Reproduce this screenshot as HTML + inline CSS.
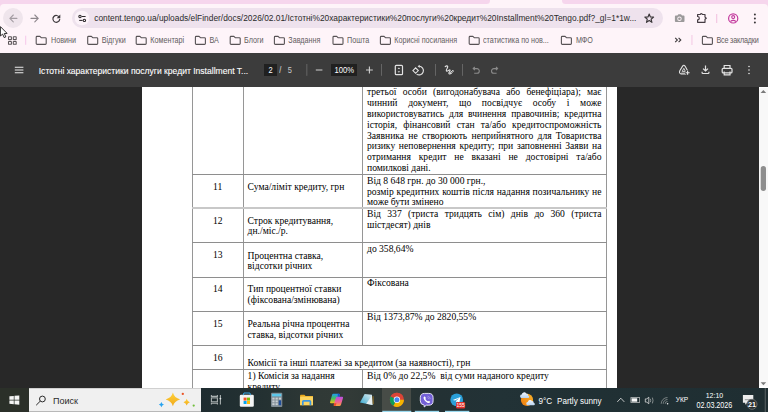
<!DOCTYPE html>
<html><head><meta charset="utf-8">
<style>
*{margin:0;padding:0;box-sizing:border-box}
html,body{width:768px;height:412px;overflow:hidden;background:#282828;font-family:"Liberation Sans",sans-serif}
.a{position:absolute}
#tabs{left:0;top:0;width:768px;height:12px;background:#f6d6ed}
#tb{left:0;top:4.2px;width:768px;height:48.8px;background:#fef4f9;border-radius:4px 4px 0 0}
#pill{left:72px;top:8px;width:591px;height:20px;border-radius:10px;background:#eee2ed}
#url{left:94.2px;top:11px;font-size:8.4px;color:#2a2a2a;white-space:nowrap;line-height:14px;transform:scaleY(1.18);transform-origin:0 10.5px}
.bm{font-size:7.2px;color:#625d60;white-space:nowrap;line-height:12px;top:35px;transform:scaleY(1.18);transform-origin:0 8.38px}
#pdftb{left:0;top:53px;width:768px;height:34px;background:#3c3c3c}
#title{left:38.75px;top:64.5px;font-size:8.55px;color:#fff;white-space:nowrap;line-height:12px;-webkit-text-stroke:0.1px #fff}
#view{left:0;top:87px;width:759px;height:301px;background:#282828}
#page{left:141.5px;top:87px;width:475.5px;height:301px;background:#fff}
.hl{position:absolute;height:1px;background:#8e8e8e}
.vl{position:absolute;width:1px;background:#969696}
.t{position:absolute;font-family:"Liberation Serif",serif;font-size:9.6px;line-height:11px;color:#000;white-space:nowrap}
.j{text-align:justify;text-align-last:justify;width:234.5px}
#sb{left:759px;top:87px;width:9px;height:301px;background:#f8f8f8}
#task{left:0;top:388px;width:768px;height:24px;background:linear-gradient(90deg,#1e2c30 0px,#1e2c30 200px,#243132 265px,#303936 320px,#323a37 350px,#2c3634 390px,#233134 440px,#223236 500px,#203034 600px,#1f2e32 768px)}
.ti{font-size:9px;color:#fff;white-space:nowrap;line-height:11px}
</style></head><body>
<div id="tabs" class="a"></div>
<div id="tb" class="a"></div>
<div id="pill" class="a"></div>
<div class="a" style="left:486px;top:0;width:80px;height:5px;background:#fef4f9"></div><div class="a" style="left:470px;top:0;width:20.3px;height:4.2px;background:#f6d6ed;border-bottom-right-radius:3.5px"></div><div class="a" style="left:562.2px;top:0;width:20px;height:4.2px;background:#f6d6ed;border-bottom-left-radius:3.5px"></div>
<!-- back hover circle -->
<div class="a" style="left:3.2px;top:8.2px;width:19.6px;height:19.6px;border-radius:10px;background:#efe5ec"></div>
<svg class="a" style="left:0;top:0" width="768" height="53">
 <g fill="none" stroke-width="1.1" stroke-linecap="round" stroke-linejoin="round">
  <path d="M10 18.4H16.9M13.3 15L9.9 18.4L13.3 21.8" stroke="#a39ca2"/>
  <path d="M31 18.4H38.2M34.8 15L38.2 18.4L34.8 21.8" stroke="#8e878d"/>
 </g>
 <path d="M59.3 17.2A3.4 3.4 0 1 0 59.7 19.3" fill="none" stroke="#3f3a3e" stroke-width="1.2" stroke-linecap="round"/>
 <path d="M60.3 14.6V18.2H56.7Z" fill="#3f3a3e"/>
 <circle cx="82" cy="18" r="7.3" fill="#fcf3f9"/>
 <g fill="none" stroke="#2b282a" stroke-width="1.05">
  <circle cx="80" cy="16.5" r="1.2"/><path d="M81.8 16.5H85.6"/>
  <circle cx="84.4" cy="20.4" r="1.2"/><path d="M79.2 20.4H82.6"/>
 </g>
 <path d="M649.20 14.00L650.38 16.98L653.57 17.18L651.10 19.22L651.90 22.32L649.20 20.60L646.50 22.32L647.30 19.22L644.83 17.18L648.02 16.98Z" fill="none" stroke="#3a3639" stroke-width="1.15" stroke-linejoin="round"/>
 <path d="M675.8 15.6h1.6l1-1.3h2.6l1 1.3h1.6a0.9 0.9 0 0 1 0.9 0.9v4.5a0.9 0.9 0 0 1-0.9 0.9h-7.8a0.9 0.9 0 0 1-0.9-0.9v-4.5a0.9 0.9 0 0 1 0.9-0.9z" fill="#9b999a"/>
 <circle cx="679.45" cy="18.8" r="2.2" fill="#fef4f9"/><circle cx="679.45" cy="18.8" r="1.3" fill="#9b999a"/>
 <path d="M697.6 14.5H700.3a1 1 0 0 1 2 0H705V17.1l1.3 1.1l-1.3 1.1V22.3H697.6V19.9a1.7 1.7 0 0 0 0-3.4Z" fill="none" stroke="#453c43" stroke-width="1.2" stroke-linejoin="round"/>
 <rect x="716.3" y="14" width="0.9" height="9" fill="#f0b8dc"/>
 <circle cx="733.2" cy="18.4" r="4.6" fill="none" stroke="#c33a9e" stroke-width="1.2"/>
 <circle cx="733.2" cy="17.1" r="1.5" fill="none" stroke="#c33a9e" stroke-width="1.1"/>
 <path d="M730.4 21.5Q733.2 19.3 736 21.5" fill="none" stroke="#c33a9e" stroke-width="1.1"/>
 <g fill="#3a3739"><circle cx="754.9" cy="14.6" r="1"/><circle cx="754.9" cy="18.5" r="1"/><circle cx="754.9" cy="22.4" r="1"/></g>
 <!-- apps grid -->
 <g fill="none" stroke="#5a5558" stroke-width="1.05">
  <rect x="8.5" y="36.7" width="2.9" height="2.9" rx="0.4"/><rect x="13.3" y="36.7" width="2.9" height="2.9" rx="0.4"/>
  <rect x="8.5" y="41.4" width="2.9" height="2.9" rx="0.4"/><rect x="13.3" y="41.4" width="2.9" height="2.9" rx="0.4"/>
 </g>
 <rect x="25.2" y="35.7" width="1" height="9.1" fill="#f5c8ea"/>
 <rect x="691.5" y="35" width="0.9" height="10" fill="#f2c2e2"/>
 <path d="M675.2 37.8L677.4 40L675.2 42.2M678.6 37.8L680.8 40L678.6 42.2" fill="none" stroke="#3d3a3c" stroke-width="1.1"/>
 <g id="fold" fill="none" stroke="#575255" stroke-width="1.1" stroke-linejoin="round">
  <path d="M36.2 37.2q0-0.8 0.8-0.8h2.9l1.3 1.3h4.1q0.9 0 0.9 0.9v4.9q0 0.9-0.9 0.9h-8.2q-0.9 0-0.9-0.9z"/>
  <path d="M87.7 37.2q0-0.8 0.8-0.8h2.9l1.3 1.3h4.1q0.9 0 0.9 0.9v4.9q0 0.9-0.9 0.9h-8.2q-0.9 0-0.9-0.9z"/>
  <path d="M136.2 37.2q0-0.8 0.8-0.8h2.9l1.3 1.3h4.1q0.9 0 0.9 0.9v4.9q0 0.9-0.9 0.9h-8.2q-0.9 0-0.9-0.9z"/>
  <path d="M195.4 37.2q0-0.8 0.8-0.8h2.9l1.3 1.3h4.1q0.9 0 0.9 0.9v4.9q0 0.9-0.9 0.9h-8.2q-0.9 0-0.9-0.9z"/>
  <path d="M230.2 37.2q0-0.8 0.8-0.8h2.9l1.3 1.3h4.1q0.9 0 0.9 0.9v4.9q0 0.9-0.9 0.9h-8.2q-0.9 0-0.9-0.9z"/>
  <path d="M274.4 37.2q0-0.8 0.8-0.8h2.9l1.3 1.3h4.1q0.9 0 0.9 0.9v4.9q0 0.9-0.9 0.9h-8.2q-0.9 0-0.9-0.9z"/>
  <path d="M333.0 37.2q0-0.8 0.8-0.8h2.9l1.3 1.3h4.1q0.9 0 0.9 0.9v4.9q0 0.9-0.9 0.9h-8.2q-0.9 0-0.9-0.9z"/>
  <path d="M380.4 37.2q0-0.8 0.8-0.8h2.9l1.3 1.3h4.1q0.9 0 0.9 0.9v4.9q0 0.9-0.9 0.9h-8.2q-0.9 0-0.9-0.9z"/>
  <path d="M469.2 37.2q0-0.8 0.8-0.8h2.9l1.3 1.3h4.1q0.9 0 0.9 0.9v4.9q0 0.9-0.9 0.9h-8.2q-0.9 0-0.9-0.9z"/>
  <path d="M561.4 37.2q0-0.8 0.8-0.8h2.9l1.3 1.3h4.1q0.9 0 0.9 0.9v4.9q0 0.9-0.9 0.9h-8.2q-0.9 0-0.9-0.9z"/>
  <path d="M702.4 37.2q0-0.8 0.8-0.8h2.9l1.3 1.3h4.1q0.9 0 0.9 0.9v4.9q0 0.9-0.9 0.9h-8.2q-0.9 0-0.9-0.9z"/>
 </g>
</svg>
<div id="url" class="a">content.tengo.ua/uploads/elFinder/docs/2026/02.01/Істотні%20характеристики%20послуги%20кредит%20Installment%20Tengo.pdf?_gl=1*1w...</div>
<div class="a bm" style="left:51px">Новини</div>
<div class="a bm" style="left:101.7px">Відгуки</div>
<div class="a bm" style="left:150.3px">Коментарі</div>
<div class="a bm" style="left:209.4px">ВА</div>
<div class="a bm" style="left:244px">Блоги</div>
<div class="a bm" style="left:288.3px">Завдання</div>
<div class="a bm" style="left:347px">Пошта</div>
<div class="a bm" style="left:394.3px">Корисні посилання</div>
<div class="a bm" style="left:483px">статистика по нов...</div>
<div class="a bm" style="left:575.9px">МФО</div>
<div class="a bm" style="left:716.5px;letter-spacing:-0.2px">Все закладки</div>
<!-- cursor -->
<svg class="a" style="left:0;top:25.6px" width="12" height="16"><path d="M0.4 0.6L0.4 10L2.6 8.1L4.2 11.6L5.8 10.9L4.3 7.5L7.1 7.4Z" fill="#fff" stroke="#1a1a1a" stroke-width="0.9" stroke-linejoin="round"/></svg>

<div id="pdftb" class="a"></div>
<div id="title" class="a">Істотні характеристики послуги кредит Installment T...</div>
<div class="a" style="left:263.6px;top:63.9px;width:13.8px;height:11.7px;background:#202020"></div>
<div class="a ti" style="left:268.4px;top:66.8px;font-size:7.5px;line-height:7.5px;color:#fff;transform:scaleY(1.12);transform-origin:0 6.23px">2</div>
<div class="a ti" style="left:279.3px;top:66.8px;font-size:7.5px;line-height:7.5px;color:#e0e0e0;transform:scaleY(1.12);transform-origin:0 6.23px">/</div>
<div class="a ti" style="left:287.7px;top:66.8px;font-size:7.5px;line-height:7.5px;color:#c8c8c8;transform:scaleY(1.12);transform-origin:0 6.23px">5</div>
<div class="a" style="left:331.1px;top:64.1px;width:26.3px;height:11.6px;background:#202020"></div>
<div class="a ti" style="left:334.6px;top:66.85px;font-size:7.65px;line-height:7.65px;color:#fff;transform:scaleY(1.1);transform-origin:0 6.35px">100%</div>
<svg class="a" style="left:0;top:53px" width="768" height="34">
 <path d="M315.8 17H322.4M366 17H372.8M369.4 13.6V20.4" stroke="#d0d0d0" stroke-width="1.1" fill="none"/>
 <g fill="#cfcfcf">
  <rect x="14.8" y="13.7" width="8.6" height="1.2"/><rect x="14.8" y="16.4" width="8.6" height="1.2"/><rect x="14.8" y="19.1" width="8.6" height="1.2"/>
 </g>
 <g fill="#6a6a6a"><rect x="306.4" y="11" width="0.9" height="11.8"/><rect x="381.1" y="11" width="0.9" height="11.8"/><rect x="435.1" y="11" width="0.9" height="11.8"/><rect x="462.1" y="11" width="0.9" height="11.8"/></g>
 <g fill="none" stroke="#e3e3e3" stroke-width="1.2">

  <rect x="395.3" y="12.3" width="7.2" height="9.4" rx="1"/>
  <path d="M412.9 17.6L415.6 14.9L418.3 17.6L415.6 20.3Z" stroke-width="1.1"/>
  <path d="M419.2 13.3A4.3 4.3 0 1 1 416.6 21.1" stroke-width="1.1"/>
  <path d="M445.2 13.6C446.8 12.2 448.6 13 447.2 15.2C445.8 17.4 446 19.2 448.2 17.6C450.2 16.2 450.8 17.2 449.3 19.2C448.2 20.8 449.6 21.6 451.2 20.4" stroke-width="1.15" stroke-linecap="round"/>
  <path d="M450.2 19.8L452.8 17.2L453.6 18L451 20.6Z" stroke-width="0.9"/>
  <path d="M682.6 13.1Q683.8 11.4 685 13.1L687.6 17.8Q688.6 20.4 686.4 20.9H681Q678.8 20.4 679.8 17.8Z" stroke-width="1.1" stroke-linejoin="round"/>
  <path d="M683.8 15.3L685.4 18.4H682.2Z" stroke-width="0.9"/>
  <path d="M681.2 20.3H685.8" stroke-width="1.5" stroke="#b8b8b8"/>
  <path d="M705.5 12.4V17.8M703 15.6L705.5 18L708 15.6M702.1 18.8V19.8Q702.1 20.5 702.8 20.5H708.2Q708.9 20.5 708.9 19.8V18.8"/>
  <rect x="722.2" y="15.3" width="9.8" height="4.6" rx="1"/>
  <path d="M724.2 15.3V12.5H730V15.3M724.2 18.5V21.8H730V18.5"/>
 </g>
 <g fill="none" stroke="#8a8a8a" stroke-width="1.1">
  <path d="M473.2 15.6H477A2.3 2.3 0 0 1 477 20.2H474.2M474.8 14L473.2 15.6L474.8 17.2"/>
  <path d="M497.6 15.6H493.8A2.3 2.3 0 0 0 493.8 20.2H496.6M496 14L497.6 15.6L496 17.2"/>
 </g>
 <path d="M397.6 15.9L398.9 14.4L400.2 15.9Z M397.6 18.2L398.9 19.7L400.2 18.2Z" fill="#d8d8d8"/><path d="M419.7 11.7V15L417.6 13.3Z" fill="#e3e3e3"/>
 <path d="M685.2 19.7H690M687.6 17.3V22.1" stroke="#3c3c3c" stroke-width="2.6"/><path d="M685.6 19.7H689.6M687.6 17.7V21.7" stroke="#e8e8e8" stroke-width="1.1"/>
 <g fill="#e3e3e3"><circle cx="749" cy="13.5" r="0.8"/><circle cx="749" cy="17" r="0.8"/><circle cx="749" cy="20.5" r="0.8"/></g>
</svg>

<div id="page" class="a"></div>
<!-- table lines -->
<div class="vl" style="left:192px;top:87px;height:301px"></div>
<div class="vl" style="left:243px;top:87px;height:301px"></div>
<div class="vl" style="left:362px;top:87px;height:258px"></div>
<div class="vl" style="left:362px;top:369px;height:19px"></div>
<div class="vl" style="left:606px;top:87px;height:301px"></div>
<div class="hl" style="left:192px;top:174px;width:415px"></div>
<div class="hl" style="left:192px;top:207px;height:2px;width:415px;background:#c8c8c8"></div>
<div class="hl" style="left:192px;top:242px;width:415px"></div>
<div class="hl" style="left:192px;top:277px;width:415px"></div>
<div class="hl" style="left:192px;top:311px;width:415px"></div>
<div class="hl" style="left:192px;top:345px;width:415px"></div>
<div class="hl" style="left:192px;top:369px;width:415px"></div>

<div class="t j" style="left:367px;top:85.96px">третьої особи (вигодонабувача або бенефіціара); має</div>
<div class="t j" style="left:367px;top:96.86px">чинний документ, що посвідчує особу і може</div>
<div class="t j" style="left:367px;top:107.76px">використовуватись для вчинення правочинів; кредитна</div>
<div class="t j" style="left:367px;top:118.66px">історія, фінансовий стан та/або кредитоспроможність</div>
<div class="t j" style="left:367px;top:129.56px">Заявника не створюють неприйнятного для Товариства</div>
<div class="t j" style="left:367px;top:140.46px">ризику неповернення кредиту; при заповненні Заяви на</div>
<div class="t j" style="left:367px;top:151.36px">отримання кредит не вказані не достовірні та/або</div>
<div class="t" style="left:367px;top:162.26px">помилкові дані.</div>
<div class="t" style="left:192.7px;width:50px;text-align:center;top:181.16px">11</div>
<div class="t" style="left:247.6px;top:181.16px">Сума/ліміт кредиту, грн</div>
<div class="t" style="left:367px;top:174.86px">Від 8 648 грн. до 30 000 грн.,</div>
<div class="t j" style="left:367px;top:185.66px">розмір кредитних коштів після надання позичальнику не</div>
<div class="t" style="left:367px;top:196.46px">може бути змінено</div>
<div class="t" style="left:192.7px;width:50px;text-align:center;top:215.26px">12</div>
<div class="t" style="left:247.6px;top:214.56px">Строк кредитування,</div>
<div class="t" style="left:247.6px;top:225.46px">дн./міс./р.</div>
<div class="t j" style="left:367px;top:207.86px">Від 337 (триста тридцять сім) днів до 360 (триста</div>
<div class="t" style="left:367px;top:218.76px">шістдесят) днів</div>
<div class="t" style="left:192.7px;width:50px;text-align:center;top:249.46px">13</div>
<div class="t" style="left:247.6px;top:249.86px">Процентна ставка,</div>
<div class="t" style="left:247.6px;top:260.06px">відсотки річних</div>
<div class="t" style="left:367px;top:242.56px">до 358,64%</div>
<div class="t" style="left:192.7px;width:50px;text-align:center;top:283.46px">14</div>
<div class="t" style="left:247.6px;top:283.46px">Тип процентної ставки</div>
<div class="t" style="left:247.6px;top:294.26px">(фіксована/змінювана)</div>
<div class="t" style="left:367px;top:276.86px">Фіксована</div>
<div class="t" style="left:192.7px;width:50px;text-align:center;top:318.16px">15</div>
<div class="t" style="left:247.6px;top:318.16px">Реальна річна процентна</div>
<div class="t" style="left:247.6px;top:328.96px">ставка, відсотки річних</div>
<div class="t" style="left:367px;top:311.36px">Від 1373,87% до 2820,55%</div>
<div class="t" style="left:192.7px;width:50px;text-align:center;top:351.96px">16</div>
<div class="t" style="left:247.6px;top:357.16px">Комісії та інші платежі за кредитом (за наявності), грн</div>
<div class="t" style="left:247.6px;top:369.86px">1) Комісія за надання</div>
<div class="t" style="left:247.6px;top:380.66px">кредиту</div>
<div class="t" style="left:367px;top:369.86px">Від 0% до 22,5%&nbsp; від суми наданого кредиту</div>

<div id="sb" class="a"></div>
<svg class="a" style="left:759px;top:87px" width="9" height="301">
 <rect x="0" y="0" width="9" height="1" fill="#ffffff"/>
 <path d="M1.6 6L4.4 2.9L7.2 6Z" fill="#7a7a7a"/>
 <rect x="1.7" y="79.1" width="5.3" height="24.9" rx="2.65" fill="#8e8e8e"/>
 <path d="M1.6 295.3L4.4 298.3L7.2 295.3Z" fill="#7a7a7a"/><rect x="0" y="299.5" width="9" height="1.5" fill="#fff"/>
</svg>

<div id="task" class="a"></div>
<div class="a" style="left:0;top:388px;width:28.7px;height:24px;background:#2b3029"></div>
<div class="a" style="left:28.7px;top:388px;width:172.7px;height:24px;background:#f0f0f0;border-top:1px solid #d0d0d0;border-bottom:1.5px solid #b8b8b8"></div>
<div class="a" style="left:382.3px;top:388px;width:29px;height:24px;background:#474c47"></div>
<div class="a ti" style="left:53px;top:396.5px;font-size:9px;line-height:9px;color:#2a2a2a">Поиск</div>
<div class="a ti" style="left:538.4px;top:397.5px;font-size:8.1px;line-height:8.1px;transform:scaleY(1.15);transform-origin:0 6.73px">9°C</div><div class="a ti" style="left:557px;top:397.5px;font-size:8.1px;line-height:8.1px;transform:scaleY(1.15);transform-origin:0 6.73px">Partly sunny</div>
<div class="a ti" style="left:675.8px;top:397px;font-size:6.6px;line-height:6.6px;transform:scaleY(1.15);transform-origin:0 5.48px">УКР</div>
<div class="a ti" style="left:705.7px;top:391.5px;font-size:7px;line-height:7px;transform:scaleY(1.15);transform-origin:0 5.81px">12:10</div>
<div class="a ti" style="left:696.4px;top:402.3px;font-size:7.2px;line-height:7.2px;transform:scaleY(1.15);transform-origin:0 5.98px">02.03.2026</div>
<svg class="a" style="left:0;top:388px" width="768" height="24">
 <g fill="#f4f4f4"><path d="M9.4 8.3L13.8 7.9V11.7H9.4Z"/><path d="M14.5 7.8L19.3 7.4V11.7H14.5Z"/><path d="M9.4 12.4H13.8V16.2L9.4 15.8Z"/><path d="M14.5 12.4H19.3V16.7L14.5 16.3Z"/></g>
 <g fill="none" stroke="#2a2a2a" stroke-width="1"><circle cx="42.4" cy="11" r="2.9"/><path d="M40.3 13.1L36.2 17.2"/></g>
 <defs><linearGradient id="st" x1="0" y1="0" x2="0" y2="1"><stop offset="0" stop-color="#ffd23a"/><stop offset="1" stop-color="#f0a81a"/></linearGradient></defs>
 <path d="M172.90 4.60Q174.34 10.04 180.10 11.40Q174.34 12.76 172.90 18.20Q171.46 12.76 165.70 11.40Q171.46 10.04 172.90 4.60Z" fill="url(#st)"/>
 <path d="M186.70 10.80Q187.34 13.52 189.90 14.20Q187.34 14.88 186.70 17.60Q186.06 14.88 183.50 14.20Q186.06 13.52 186.70 10.80Z" fill="url(#st)"/>
 <path d="M161.40 14.00Q161.97 16.03 164.00 16.60Q161.97 17.17 161.40 19.20Q160.83 17.17 158.80 16.60Q160.83 16.03 161.40 14.00Z" fill="#2aa4f0"/>
 <circle cx="182.8" cy="5.9" r="1.15" fill="#ea5325"/>
 <circle cx="193.7" cy="17.6" r="1.15" fill="#72bf3e"/>
 <g fill="none" stroke="#a9b0b0" stroke-width="1.1"><path d="M211.4 7V8.4H217.4V7M211.4 16.6V15.2H217.4V16.6"/><rect x="211.4" y="9.9" width="6" height="3.9"/><path d="M220.4 7V16.6"/></g><circle cx="220.4" cy="10.6" r="0.9" fill="#e0e4e4"/>
 <!-- store -->
 <rect x="239.8" y="6.8" width="14" height="12" rx="1.3" fill="#f4f4f4"/>
 <path d="M243.3 7.2L243.9 5H249.9L250.5 7.2" fill="none" stroke="#3aa9e8" stroke-width="1"/>
 <rect x="243.6" y="9.6" width="3" height="3" fill="#f35325"/><rect x="247" y="9.6" width="3" height="3" fill="#81bc06"/>
 <rect x="243.6" y="13" width="3" height="3" fill="#05a6f0"/><rect x="247" y="13" width="3" height="3" fill="#ffba08"/>
 <!-- calc -->
 <rect x="271" y="4.8" width="11.3" height="14.2" rx="1" fill="#7e8b94"/>
 <rect x="272" y="5.8" width="9.3" height="2.6" fill="#5cc7ea"/>
 <g fill="#c8ced2"><rect x="272.3" y="9.6" width="2.3" height="2"/><rect x="275.5" y="9.6" width="2.3" height="2"/><rect x="272.3" y="12.4" width="2.3" height="2"/><rect x="275.5" y="12.4" width="2.3" height="2"/><rect x="272.3" y="15.2" width="2.3" height="2"/><rect x="275.5" y="15.2" width="2.3" height="2"/></g>
 <rect x="278.8" y="12.4" width="2.3" height="4.8" fill="#1f4e9b"/><rect x="278.8" y="9.6" width="2.3" height="2" fill="#c8ced2"/>
 <!-- explorer -->
 <path d="M300.1 7.5Q300.1 6.8 300.8 6.8H304.4L305.6 8H313V17.2H300.1Z" fill="#e9a91d"/>
 <rect x="300.1" y="8.6" width="12.9" height="8.6" fill="#fcd460"/>
 <path d="M302.8 17.2V13.6Q302.8 12.8 303.6 12.8H309.6Q310.4 12.8 310.4 13.6V17.2" fill="none" stroke="#3b95e0" stroke-width="1.7"/>
 <!-- copilot -->
 <defs>
  <linearGradient id="cpl" x1="0" y1="0" x2="0" y2="1"><stop offset="0" stop-color="#1e9bf0"/><stop offset="0.5" stop-color="#46c35a"/><stop offset="1" stop-color="#f2c21b"/></linearGradient>
  <linearGradient id="cpr" x1="0" y1="0" x2="0" y2="1"><stop offset="0" stop-color="#b54fe6"/><stop offset="0.55" stop-color="#f06292"/><stop offset="1" stop-color="#f9a23b"/></linearGradient>
 </defs>
 <path d="M333.3 5.8H338.8Q340.2 5.8 339.8 7.2L337.2 14.2Q336.8 15.2 335.6 15.2H331Q329.7 15.2 330.1 13.9L332 7.2Q332.4 5.8 333.3 5.8Z" fill="url(#cpl)"/>
 <path d="M337.8 5.8Q339.6 5.6 339.9 7L337.5 14Z" fill="#1a4fd0"/>
 <path d="M337.5 8.7H342.1Q343.4 8.7 343 10L341 16.8Q340.6 18 339.3 18H334.7Q333.4 18 333.8 16.8L335.8 10Q336.2 8.7 337.5 8.7Z" fill="url(#cpr)"/>
 <path d="M334 15.2L336.5 15.2L335.6 18H334.7Q333.4 18 333.8 16.8Z" fill="#ef4b2c"/>
 <!-- notepad -->
 <defs><linearGradient id="np" x1="0" y1="1" x2="1" y2="0"><stop offset="0" stop-color="#2fa8d2"/><stop offset="0.6" stop-color="#9fd2e2"/><stop offset="1" stop-color="#e2eef2"/></linearGradient></defs>
 <path d="M364.6 6.1L371.9 6.7L372.5 16.9L360 14.6Z" fill="url(#np)"/>
 <path d="M371.9 7.5L372.5 16.9L366.2 15.8Z" fill="#e6eef1"/>
 <path d="M373 8.2L373.2 16.2" stroke="#b88527" stroke-width="0.8"/>
 <!-- chrome -->
 <circle cx="396.9" cy="11.8" r="7" fill="#db4437"/>
 <path d="M396.9 11.8L390.8 8.3A7 7 0 0 0 393.4 17.9Z" fill="#0f9d58"/>
 <path d="M396.9 11.8L393.4 17.9A7 7 0 0 0 403.9 11.8Z" fill="#f4b400"/>
 <path d="M396.9 11.8L390.8 8.3A7 7 0 0 1 403 8.3Z" fill="#db4437"/>
 <circle cx="396.9" cy="11.8" r="3.2" fill="#fff"/><circle cx="396.9" cy="11.8" r="2.5" fill="#4285f4"/>
 <rect x="382.3" y="22.8" width="29" height="1.2" fill="#9ad9ef"/>
 <!-- viber -->
 <path d="M424.6 5.4H428.8Q433.1 5.4 433.1 9.7V12.9Q433.1 17.2 428.8 17.2H426.4L424.2 19V17.1Q420.3 16.6 420.3 12.9V9.7Q420.3 5.4 424.6 5.4Z" fill="#7360d6" stroke="#f2f0ff" stroke-width="0.9" stroke-linejoin="round"/>
 <path d="M424.4 8.6C425 8.3 425.6 9.2 425.8 9.9C425.9 10.4 425.2 10.6 425.5 11.2C426 12.1 426.8 12.9 427.7 13.3C428.2 13.5 428.4 12.8 429 12.9C429.6 13.1 430.4 13.7 430.1 14.3C429.7 15.1 428.8 15.3 427.8 14.9C425.8 14 424.1 12.1 423.6 10.2C423.4 9.5 423.8 8.9 424.4 8.6Z" fill="#fff"/>
 <path d="M427.6 8.2Q430 8.6 430.4 11M427.4 9.6Q428.8 9.9 429 11.2" fill="none" stroke="#b9aef0" stroke-width="0.6"/>
 <rect x="414.8" y="22.8" width="24.3" height="1.2" fill="#9ad9ef"/>
 <!-- telegram -->
 <circle cx="456.7" cy="11.8" r="6.4" fill="#2a9fd8"/>
 <path d="M452.8 12.1L460.5 9.1L459.3 14.9L457 13.4L455.9 14.6L456 12.9L459.4 10L455 12.6Z" fill="#fff"/>
 <rect x="456.1" y="14" width="9" height="6.4" rx="1.2" fill="#e5312d"/>
 <text x="460.6" y="19" font-size="4.9" fill="#fff" text-anchor="middle" font-family="Liberation Sans">155</text>
 <rect x="445" y="22.8" width="24.3" height="1.2" fill="#9ad9ef"/>
 <!-- weather -->
 <defs>
  <linearGradient id="sun" x1="1" y1="0" x2="0" y2="1"><stop offset="0" stop-color="#fbb52a"/><stop offset="1" stop-color="#ee7a0e"/></linearGradient>
  <linearGradient id="cld" x1="0" y1="0" x2="0" y2="1"><stop offset="0" stop-color="#f2f7fd"/><stop offset="1" stop-color="#b9d3ef"/></linearGradient>
 </defs>
 <circle cx="527" cy="11.9" r="6.1" fill="url(#sun)"/>
 <path d="M521.2 9.9a1.7 1.7 0 0 1 0.6-3.3a2.4 2.4 0 0 1 4.4-1.2a1.9 1.9 0 0 1 1.9 2.2a1.2 1.2 0 0 1 -0.2 2.4Z" fill="url(#cld)"/>
 <path d="M527.3 17.2a1.6 1.6 0 0 1 0.5-3.1a2.3 2.3 0 0 1 4.2-1.1a1.8 1.8 0 0 1 1.8 2a1.1 1.1 0 0 1 -0.1 2.2Z" fill="url(#cld)"/>
 <!-- tray -->
 <path d="M617.3 13.9L620.8 10.2L624.3 13.9" fill="none" stroke="#e0e0e0" stroke-width="0.85"/>
 <rect x="630.9" y="9.6" width="8.7" height="4.8" fill="none" stroke="#b9bcbc" stroke-width="0.8"/>
 <rect x="631.6" y="10.3" width="5.6" height="3.4" fill="#fafafa"/><rect x="638.2" y="10.3" width="0.9" height="3.4" fill="#1c2a2d"/>
 <path d="M645.3 10.9H646.8L648.8 9.2V15.8L646.8 14.1H645.3Z" fill="none" stroke="#dcdcdc" stroke-width="0.8"/>
 <path d="M650.3 10.8Q651.1 12.5 650.3 14.2M652.4 9.6Q653.6 12.5 652.4 15.4" fill="none" stroke="#b0b4b4" stroke-width="0.7"/>
 <path d="M665.20 15.80A2.3 2.3 0 0 1 667.50 13.50 M663.20 15.80A4.3 4.3 0 0 1 667.50 11.50 M661.20 15.80A6.3 6.3 0 0 1 667.50 9.50" fill="none" stroke="#8d9494" stroke-width="0.8"/>
 <circle cx="667.6" cy="15.7" r="0.8" fill="#f0f0f0"/>
 <!-- notification -->
 <path d="M742.9 7.1H753.3V14.7H747.3L745.2 16.8V14.7H742.9Z" fill="#ececec"/>
 <path d="M744.8 11.7H751.4" stroke="#9a9e9f" stroke-width="1.1"/>
 <circle cx="752" cy="16.3" r="5" fill="#2a2f30" stroke="#6b7172" stroke-width="0.9"/>
 <text x="752" y="19.1" font-size="7.2" font-weight="bold" fill="#fff" text-anchor="middle" font-family="Liberation Sans">21</text>
 <rect x="764.7" y="0" width="1.2" height="24" fill="#505a5c"/>
</svg>
</body></html>
